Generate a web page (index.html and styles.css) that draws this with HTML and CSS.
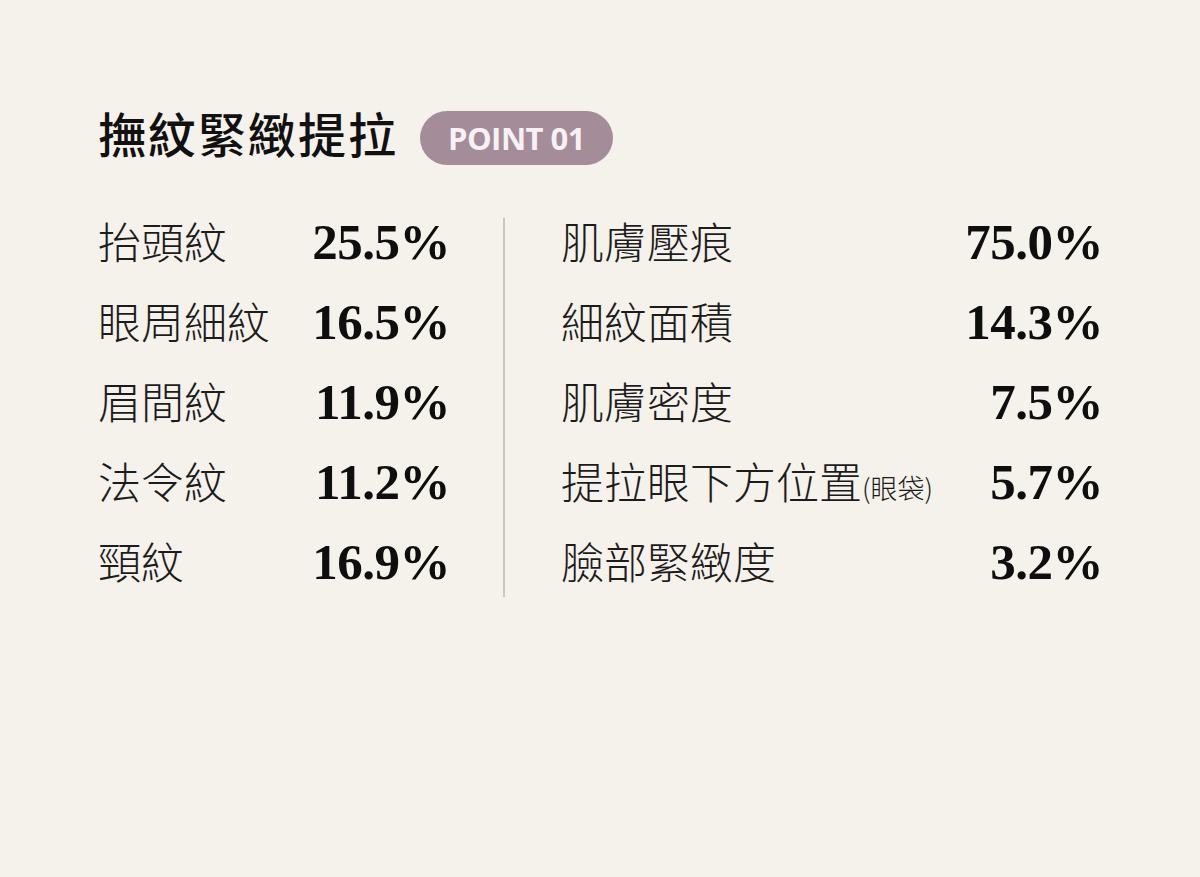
FILE: index.html
```html
<!DOCTYPE html>
<html lang="zh-Hant">
<head>
<meta charset="utf-8">
<link rel="stylesheet" href="styles.css">
</head>
<body>
<main class="page">
  <header class="head">
    <h1 class="title">撫紋緊緻提拉</h1>
    <span class="badge">POINT 01</span>
  </header>
  <section class="table">
    <div class="col col-left">
      <div class="row"><span class="label">抬頭紋</span><span class="num">25.5%</span></div>
      <div class="row"><span class="label">眼周細紋</span><span class="num">16.5%</span></div>
      <div class="row"><span class="label">眉間紋</span><span class="num">11.9%</span></div>
      <div class="row"><span class="label">法令紋</span><span class="num">11.2%</span></div>
      <div class="row"><span class="label">頸紋</span><span class="num">16.9%</span></div>
    </div>
    <div class="divider"></div>
    <div class="col col-right">
      <div class="row"><span class="label">肌膚壓痕</span><span class="num">75.0%</span></div>
      <div class="row"><span class="label">細紋面積</span><span class="num">14.3%</span></div>
      <div class="row"><span class="label">肌膚密度</span><span class="num">7.5%</span></div>
      <div class="row"><span class="label">提拉眼下方位置<small class="note">(眼袋)</small></span><span class="num">5.7%</span></div>
      <div class="row"><span class="label">臉部緊緻度</span><span class="num">3.2%</span></div>
    </div>
  </section>
</main>
</body>
</html>
```

FILE: styles.css
```css
html, body {
  margin: 0;
  padding: 0;
  background: #f5f1eb;
}
body {
  width: 1200px;
  height: 877px;
  overflow: hidden;
  font-family: "Noto Sans CJK TC", "Noto Sans", sans-serif;
  color: #111;
}
.page {
  padding: 108px 0 0 98px;
}
.head {
  display: flex;
  align-items: center;
  gap: 22px;
  height: 60px;
}
.title {
  margin: 0 0 12px 0;
  font-size: 48px;
  font-weight: 500;
  letter-spacing: 2px;
  line-height: 60px;
  color: #111;
}
.badge {
  display: inline-flex;
  align-items: center;
  justify-content: center;
  width: 193px;
  height: 54px;
  border-radius: 27px;
  background: #a48d99;
  color: #f7f1f3;
  font-family: "Open Sans", "Noto Sans", sans-serif;
  font-weight: 700;
  font-size: 31px;
  letter-spacing: -0.5px;
}
.table {
  display: flex;
  margin-top: 32px;
}
.col {
  display: flex;
  flex-direction: column;
}
.col-left {
  width: 352px;
}
.col-right {
  width: 542px;
}
.divider {
  width: 2px;
  background: #cbc5c0;
  margin: 18px 56px 0 53px;
  height: 379px;
}
.row {
  display: flex;
  justify-content: space-between;
  align-items: baseline;
  height: 80px;
}
.label {
  font-size: 43px;
  font-weight: 300;
  line-height: 80px;
  color: #1c1c1c;
}
.note {
  font-size: 27px;
  font-weight: 300;
}
.num {
  font-family: "Liberation Serif", "DejaVu Serif", serif;
  font-weight: 700;
  font-size: 51px;
  letter-spacing: -0.5px;
  line-height: 80px;
  color: #0e0e0e;
}
```
